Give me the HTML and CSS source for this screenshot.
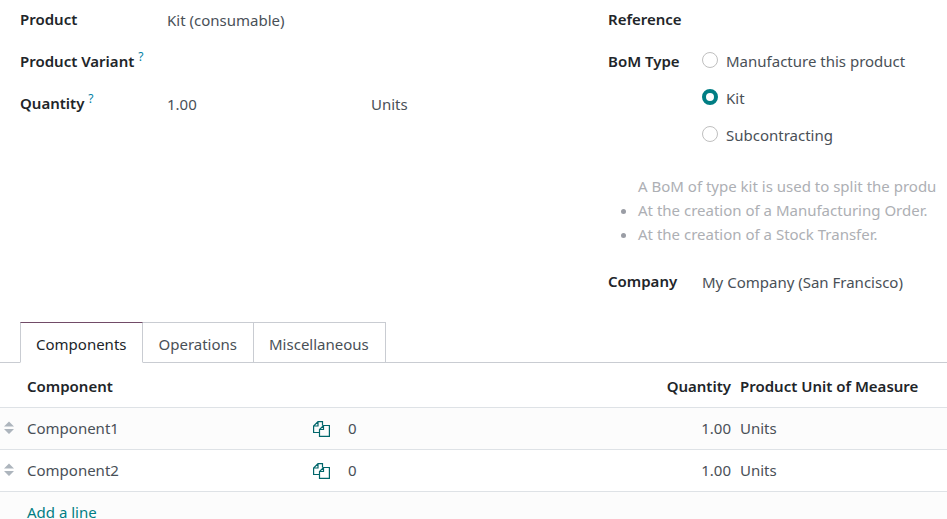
FILE: index.html
```html
<!DOCTYPE html>
<html lang="en">
<head>
  <meta charset="utf-8">
  <meta name="viewport" content="width=device-width,initial-scale=1">
  <title>Bill of Materials</title>
  <link rel="stylesheet" href="styles.css">
</head>
<body>

<!-- shared icons -->
<svg class="defs" width="0" height="0" aria-hidden="true">
  <symbol id="sort" viewBox="0 0 10 14">
    <path d="M5 .5L10 5.5H0zM0 8H10L5 13z"/>
  </symbol>
  <symbol id="copy" viewBox="0 0 17 16">
    <path d="M6.5 11.5H.6V5L5 .6H9.5V4.5M5 .6V5H.6M6.5 15.4V8.5L10.5 4.5H16.4V15.4zM10.5 4.5V8.5H6.5"/>
  </symbol>
</svg>

<form class="sheet">
  <div class="groups">
    <div class="group main">
      <label for="product">Product</label>
      <input id="product" type="text" value="Kit (consumable)">

      <label for="variant">Product Variant <sup>?</sup></label>
      <input id="variant" type="text">

      <label for="qty">Quantity <sup>?</sup></label>
      <div class="qty">
        <input id="qty" type="text" value="1.00">
        <input type="text" value="Units" aria-label="Unit of measure">
      </div>
    </div>

    <div class="group side">
      <label for="ref">Reference</label>
      <input id="ref" type="text">

      <span class="label" id="type-label">BoM Type</span>
      <div class="radios" role="radiogroup" aria-labelledby="type-label">
        <label><input type="radio" name="type"> Manufacture this product</label>
        <label><input type="radio" name="type" checked> Kit</label>
        <label><input type="radio" name="type"> Subcontracting</label>
      </div>

      <div class="help">
        <p>A BoM of type kit is used to split the produ</p>
        <ul>
          <li>At the creation of a Manufacturing Order.</li>
          <li>At the creation of a Stock Transfer.</li>
        </ul>
      </div>

      <label for="company">Company</label>
      <input id="company" type="text" value="My Company (San Francisco)">
    </div>
  </div>

  <div class="tabs" role="tablist">
    <button type="button" role="tab" class="active" aria-selected="true">Components</button>
    <button type="button" role="tab" aria-selected="false">Operations</button>
    <button type="button" role="tab" aria-selected="false">Miscellaneous</button>
  </div>

  <table>
    <thead>
      <tr>
        <th class="handle"></th>
        <th class="name">Component</th>
        <th class="copy"></th>
        <th class="num">Quantity</th>
        <th class="unit">Product Unit of Measure</th>
      </tr>
    </thead>
    <tbody>
      <tr>
        <td class="handle"><svg><use href="#sort"/></svg></td>
        <td>Component1</td>
        <td class="copy"><a href="#"><svg><use href="#copy"/></svg></a><span>0</span></td>
        <td class="num">1.00</td>
        <td>Units</td>
      </tr>
      <tr>
        <td class="handle"><svg><use href="#sort"/></svg></td>
        <td>Component2</td>
        <td class="copy"><a href="#"><svg><use href="#copy"/></svg></a><span>0</span></td>
        <td class="num">1.00</td>
        <td>Units</td>
      </tr>
      <tr>
        <td></td>
        <td colspan="4"><a href="#">Add a line</a></td>
      </tr>
    </tbody>
  </table>
</form>

</body>
</html>
```
FILE: styles.css
```css
* {box-sizing:border-box}
body   {margin:0;background:#fff;color:#495057;overflow:hidden;
        font:15px/24px "Noto Sans", "Open Sans", sans-serif}
input, button {font:inherit;color:inherit;margin:0;padding:0;border:0;background:none}
input[type=text] {width:100%;min-width:0;height:24px}
a      {color:#017e84;text-decoration:none}
.defs  {position:absolute}

/* form fields */
.groups {display:grid;grid-template-columns:588px minmax(0,1fr);padding:7px 0 0 20px}
.group {display:grid;row-gap:18px;align-content:start;align-items:start}
.main  {grid-template-columns:147px minmax(0,1fr);padding-right:20px}
.side  {grid-template-columns:94px minmax(0,1fr)}
.group > label, .label {font-weight:600;color:#212529}
.group > input, .qty {margin-top:1px;margin-bottom:-1px}
sup    {font-size:12px;font-weight:400;line-height:0;color:#0180a5}
.qty   {display:grid;grid-template-columns:204px minmax(0,1fr)}

.radios {display:grid;row-gap:13px}
.radios label {display:flex;align-items:center;gap:8px}
.radios input {appearance:none;width:16px;height:16px;margin-bottom:3px;
               border:1px solid #bfbfbf;border-radius:50%}
.radios input:checked {border:4px solid #017e84}

.help  {grid-column:1/-1;margin:9px 0 5px;padding-left:30px;color:#adafb4;
        white-space:nowrap;overflow:hidden}
.help p, .help ul {margin:0;padding:0}
.help li::marker {color:#9a9da5}

/* notebook */
.tabs  {display:flex;margin-top:29px;padding-left:20px;border-bottom:1px solid #c9ccd2}
.tabs button {height:41px;margin-bottom:-1px;padding:2px 16px 0 15px;
              border:1px solid #c9ccd2;border-left:0}
.tabs .active {color:#212529;background:#fff;border-left:1px solid #c9ccd2;
               border-top-color:#714b67;border-bottom-color:#fff}

table  {width:100%;border-collapse:collapse;table-layout:fixed}
th, td {height:42px;padding:0 4px;text-align:left;border-bottom:1px solid #dee2e6}
th     {height:44px;padding-top:2px;font-weight:600;color:#212529}
tbody tr:nth-child(odd) {background:#fcfcfc}
.handle {width:23px}
.name  {width:286px}
.unit  {width:211px}
.num   {text-align:right;padding-right:5px}
.handle svg {display:block;width:10px;height:14px;fill:#adb5bd}
.copy svg {width:17px;height:16px;margin-right:18px;vertical-align:-3px;
           fill:none;stroke:#01666b;stroke-width:1.2}
```
